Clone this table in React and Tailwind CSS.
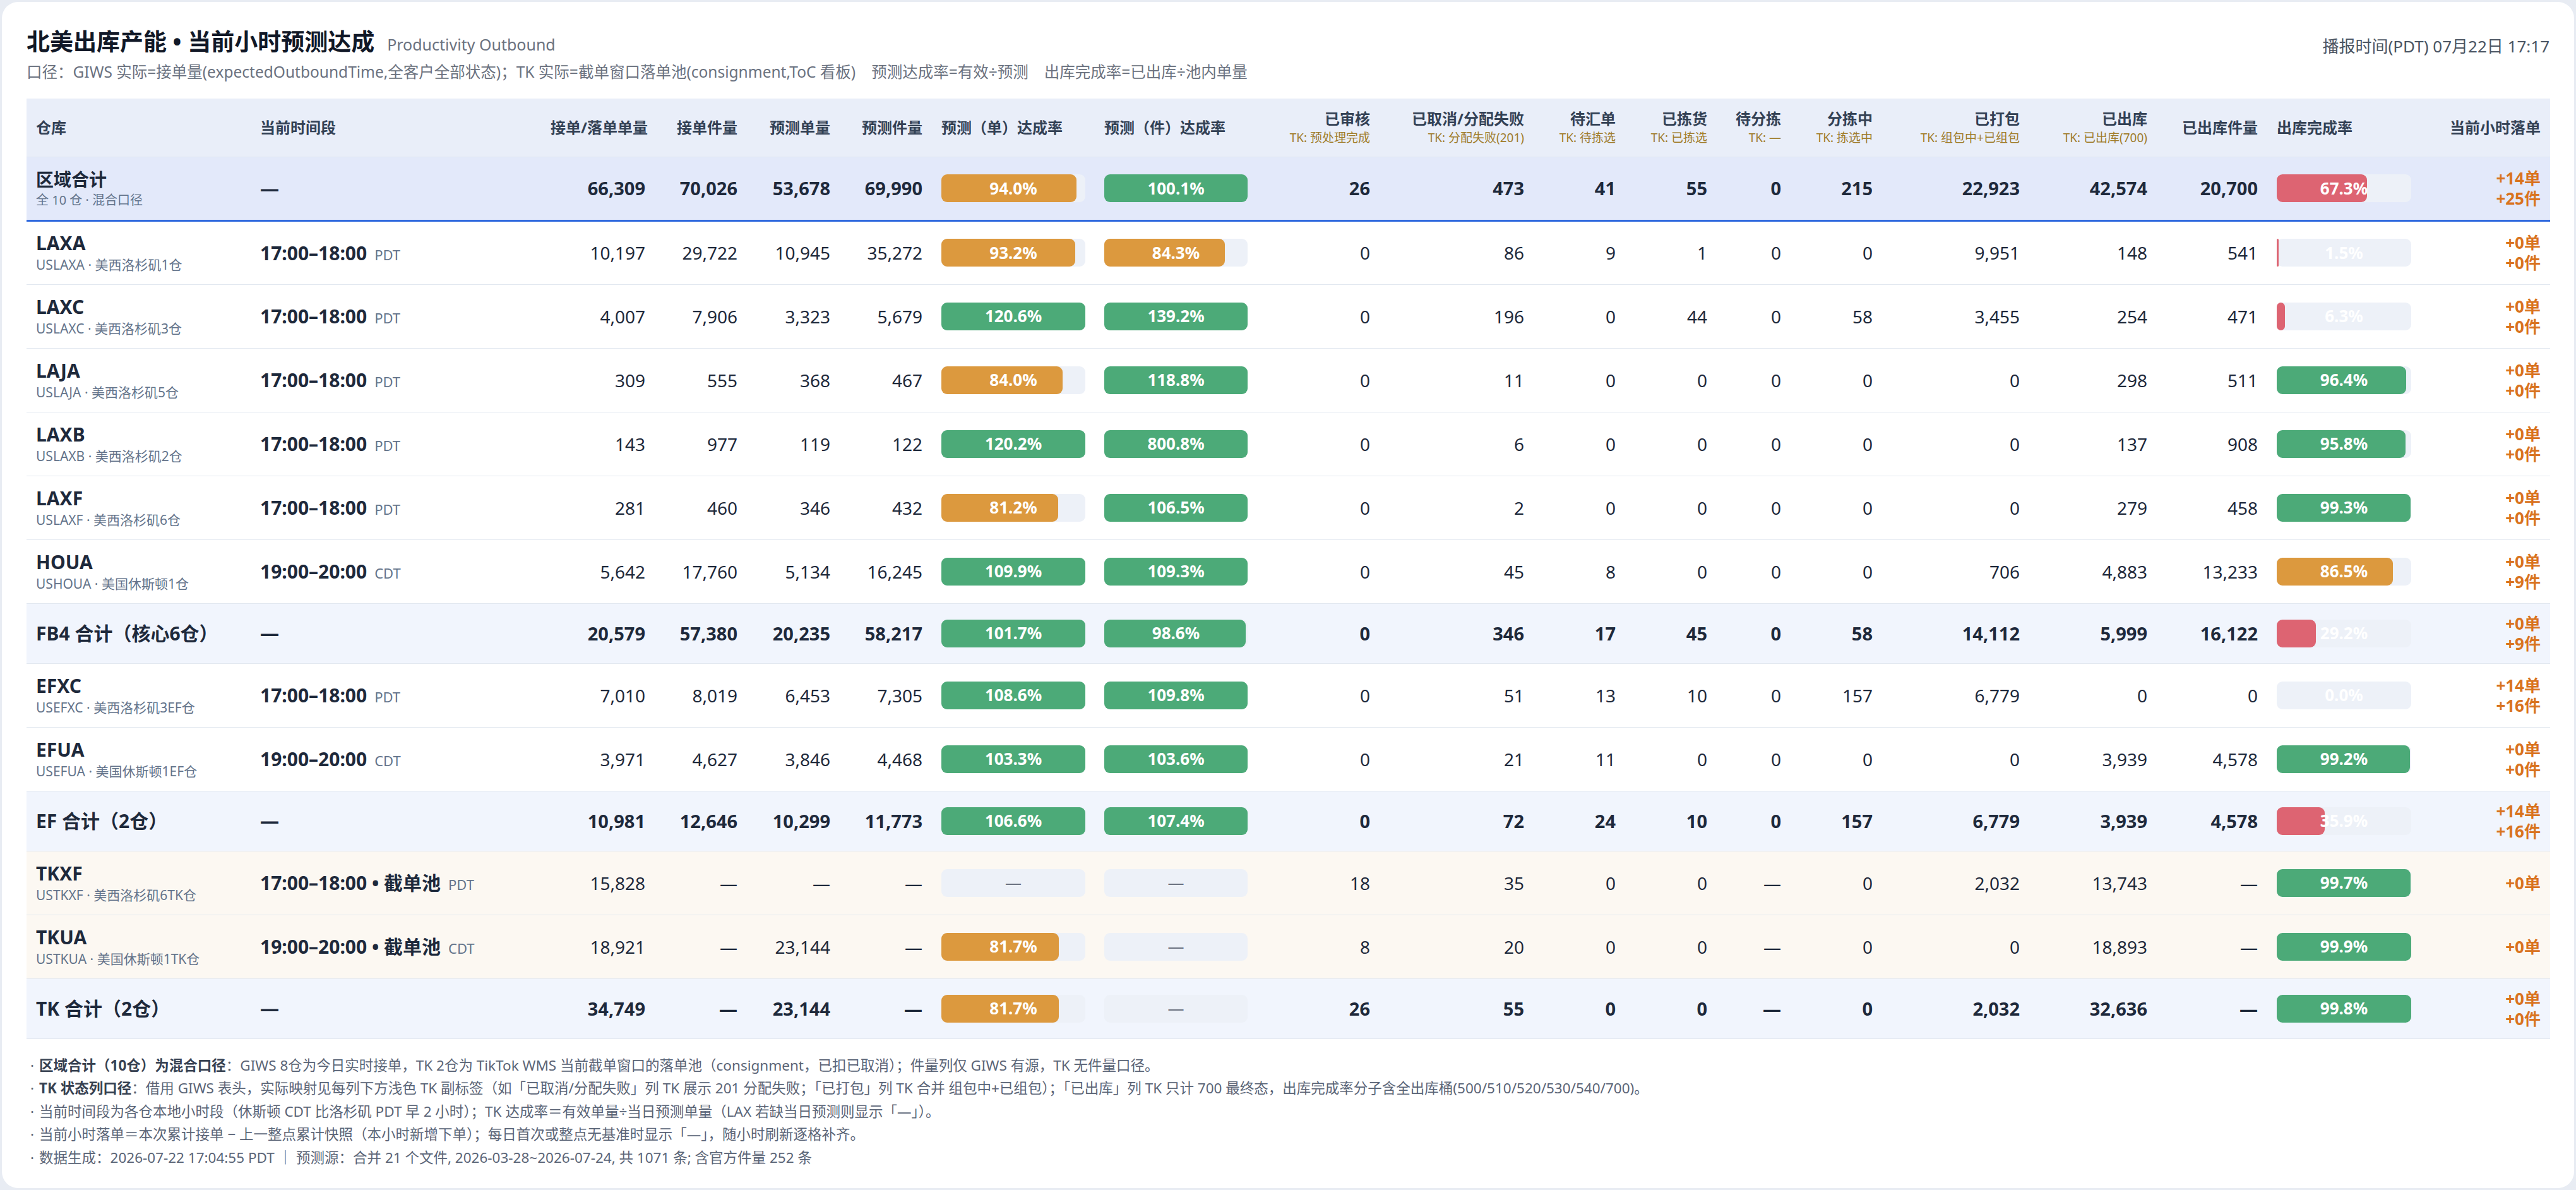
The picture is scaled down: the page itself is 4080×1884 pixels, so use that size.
import React from "react";

const COLS = [
  "w-[355px]", "w-[460px]", "w-[180px]", "w-[146px]", "w-[147px]", "w-[146px]", "w-[258px]",
  "w-[257px]", "w-[194px]", "w-[244px]", "w-[145px]", "w-[145px]", "w-[117px]", "w-[145px]",
  "w-[233px]", "w-[202px]", "w-[175px]", "w-[243px]", "w-[205px]",
];

const HEAD = [
  { t: "仓库", left: true },
  { t: "当前时间段", left: true },
  { t: "接单/落单单量" },
  { t: "接单件量" },
  { t: "预测单量" },
  { t: "预测件量" },
  { t: "预测（单）达成率", left: true },
  { t: "预测（件）达成率", left: true },
  { t: "已审核", s: "TK: 预处理完成" },
  { t: "已取消/分配失败", s: "TK: 分配失败(201)" },
  { t: "待汇单", s: "TK: 待拣选" },
  { t: "已拣货", s: "TK: 已拣选" },
  { t: "待分拣", s: "TK: —" },
  { t: "分拣中", s: "TK: 拣选中" },
  { t: "已打包", s: "TK: 组包中+已组包" },
  { t: "已出库", s: "TK: 已出库(700)" },
  { t: "已出库件量" },
  { t: "出库完成率", left: true },
  { t: "当前小时落单" },
];

// kind: total | wh | sub | tk
const ROWS = [
  {
    kind: "total", code: "区域合计", sub: "全 10 仓 · 混合口径",
    v: ["66,309", "70,026", "53,678", "69,990"], r1: 94.0, r2: 100.1,
    s: ["26", "473", "41", "55", "0", "215", "22,923", "42,574", "20,700"], done: 67.3, hour: ["+14单", "+25件"],
  },
  {
    kind: "wh", code: "LAXA", sub: "USLAXA · 美西洛杉矶1仓", time: "17:00–18:00", tz: "PDT",
    v: ["10,197", "29,722", "10,945", "35,272"], r1: 93.2, r2: 84.3,
    s: ["0", "86", "9", "1", "0", "0", "9,951", "148", "541"], done: 1.5, hour: ["+0单", "+0件"],
  },
  {
    kind: "wh", code: "LAXC", sub: "USLAXC · 美西洛杉矶3仓", time: "17:00–18:00", tz: "PDT",
    v: ["4,007", "7,906", "3,323", "5,679"], r1: 120.6, r2: 139.2,
    s: ["0", "196", "0", "44", "0", "58", "3,455", "254", "471"], done: 6.3, hour: ["+0单", "+0件"],
  },
  {
    kind: "wh", code: "LAJA", sub: "USLAJA · 美西洛杉矶5仓", time: "17:00–18:00", tz: "PDT",
    v: ["309", "555", "368", "467"], r1: 84.0, r2: 118.8,
    s: ["0", "11", "0", "0", "0", "0", "0", "298", "511"], done: 96.4, hour: ["+0单", "+0件"],
  },
  {
    kind: "wh", code: "LAXB", sub: "USLAXB · 美西洛杉矶2仓", time: "17:00–18:00", tz: "PDT",
    v: ["143", "977", "119", "122"], r1: 120.2, r2: 800.8,
    s: ["0", "6", "0", "0", "0", "0", "0", "137", "908"], done: 95.8, hour: ["+0单", "+0件"],
  },
  {
    kind: "wh", code: "LAXF", sub: "USLAXF · 美西洛杉矶6仓", time: "17:00–18:00", tz: "PDT",
    v: ["281", "460", "346", "432"], r1: 81.2, r2: 106.5,
    s: ["0", "2", "0", "0", "0", "0", "0", "279", "458"], done: 99.3, hour: ["+0单", "+0件"],
  },
  {
    kind: "wh", code: "HOUA", sub: "USHOUA · 美国休斯顿1仓", time: "19:00–20:00", tz: "CDT",
    v: ["5,642", "17,760", "5,134", "16,245"], r1: 109.9, r2: 109.3,
    s: ["0", "45", "8", "0", "0", "0", "706", "4,883", "13,233"], done: 86.5, hour: ["+0单", "+9件"],
  },
  {
    kind: "sub", code: "FB4 合计（核心6仓）",
    v: ["20,579", "57,380", "20,235", "58,217"], r1: 101.7, r2: 98.6,
    s: ["0", "346", "17", "45", "0", "58", "14,112", "5,999", "16,122"], done: 29.2, hour: ["+0单", "+9件"],
  },
  {
    kind: "wh", code: "EFXC", sub: "USEFXC · 美西洛杉矶3EF仓", time: "17:00–18:00", tz: "PDT",
    v: ["7,010", "8,019", "6,453", "7,305"], r1: 108.6, r2: 109.8,
    s: ["0", "51", "13", "10", "0", "157", "6,779", "0", "0"], done: 0, hour: ["+14单", "+16件"],
  },
  {
    kind: "wh", code: "EFUA", sub: "USEFUA · 美国休斯顿1EF仓", time: "19:00–20:00", tz: "CDT",
    v: ["3,971", "4,627", "3,846", "4,468"], r1: 103.3, r2: 103.6,
    s: ["0", "21", "11", "0", "0", "0", "0", "3,939", "4,578"], done: 99.2, hour: ["+0单", "+0件"],
  },
  {
    kind: "sub", code: "EF 合计（2仓）",
    v: ["10,981", "12,646", "10,299", "11,773"], r1: 106.6, r2: 107.4,
    s: ["0", "72", "24", "10", "0", "157", "6,779", "3,939", "4,578"], done: 35.9, hour: ["+14单", "+16件"],
  },
  {
    kind: "tk", code: "TKXF", sub: "USTKXF · 美西洛杉矶6TK仓", time: "17:00–18:00 • 截单池", tz: "PDT",
    v: ["15,828", "—", "—", "—"], r1: null, r2: null,
    s: ["18", "35", "0", "0", "—", "0", "2,032", "13,743", "—"], done: 99.7, hour: ["+0单"],
  },
  {
    kind: "tk", code: "TKUA", sub: "USTKUA · 美国休斯顿1TK仓", time: "19:00–20:00 • 截单池", tz: "CDT",
    v: ["18,921", "—", "23,144", "—"], r1: 81.7, r2: null,
    s: ["8", "20", "0", "0", "—", "0", "0", "18,893", "—"], done: 99.9, hour: ["+0单"],
  },
  {
    kind: "sub", code: "TK 合计（2仓）",
    v: ["34,749", "—", "23,144", "—"], r1: 81.7, r2: null,
    s: ["26", "55", "0", "0", "—", "0", "2,032", "32,636", "—"], done: 99.8, hour: ["+0单", "+0件"],
  },
];

const FILL = {
  green: "bg-[#4caa78]",
  orange: "bg-[#dc993e]",
  red: "bg-[#dd6472]",
};

function tone(p) {
  if (p >= 95) return "green";
  if (p >= 80) return "orange";
  return "red";
}

function Bar({ pct }) {
  if (pct === null) {
    return (
      <div className="flex h-[44px] w-full items-center justify-center rounded-[9px] bg-[#edf1f8] text-[26px] text-[#6b7280]">
        —
      </div>
    );
  }
  return (
    <div className="relative h-[44px] w-full rounded-[9px] bg-[#edf1f8]">
      {pct > 0 && (
        <div
          className={`absolute inset-y-0 left-0 rounded-[9px] ${FILL[tone(pct)]}`}
          style={{ width: `${Math.min(pct, 100)}%` }}
        />
      )}
      <span className="relative flex h-full items-center justify-center text-[26px] font-bold text-white">
        {pct.toFixed(1)}%
      </span>
    </div>
  );
}

const ROW_BG = {
  total: "bg-[#e3e9fa]",
  wh: "bg-white",
  sub: "bg-[#f1f5fd]",
  tk: "bg-[#fcf8f2]",
};

function Row({ r }) {
  const summary = r.kind === "total" || r.kind === "sub";
  const line = r.kind === "total" ? "border-b-[3px] border-b-[#3069de]" : "border-b border-b-[#e2e8f0]";
  const h = r.kind === "sub" ? "h-[95px]" : "h-[101px]";
  const td = `px-[15px] ${line}`;
  const num = summary ? "text-[29px] font-bold text-[#1e293b]" : "text-[28px] text-[#1e293b]";

  return (
    <tr className={`${ROW_BG[r.kind]} ${h}`}>
      <td className={td}>
        {r.kind === "total" ? (
          <div className="flex flex-col">
            <span className="text-[28px] font-bold leading-[38px] text-[#1e293b]">{r.code}</span>
            <span className="text-[20px] leading-[28px] text-[#64748b]">{r.sub}</span>
          </div>
        ) : r.sub ? (
          <div className="flex flex-col">
            <span className="text-[30px] font-bold leading-[38px] text-[#1e293b]">{r.code}</span>
            <span className="text-[21px] leading-[30px] text-[#64748b]">{r.sub}</span>
          </div>
        ) : (
          <span className="text-[30px] font-bold text-[#1e293b]">{r.code}</span>
        )}
      </td>
      <td className={td}>
        {r.time ? (
          <span className="whitespace-nowrap">
            <span className="text-[30px] font-bold text-[#1e293b]">{r.time}</span>
            <span className="ml-[12px] text-[22px] text-[#64748b]">{r.tz}</span>
          </span>
        ) : (
          <span className="text-[30px] font-bold text-[#1e293b]">—</span>
        )}
      </td>
      {r.v.map((x, i) => (
        <td key={i} className={`${td} text-right ${num}`}>{x}</td>
      ))}
      <td className={td}><Bar pct={r.r1} /></td>
      <td className={td}><Bar pct={r.r2} /></td>
      {r.s.map((x, i) => (
        <td key={i} className={`${td} text-right ${num}`}>{x}</td>
      ))}
      <td className={td}><Bar pct={r.done} /></td>
      <td className={`${td} text-right`}>
        <div className="flex flex-col items-end text-[26px] font-bold leading-[32px] text-[#d9731f]">
          {r.hour.map((x) => (
            <span key={x}>{x}</span>
          ))}
        </div>
      </td>
    </tr>
  );
}

function Note({ label, children }) {
  return (
    <p className="leading-[36.5px]">
      <span className="mr-[8px]">·</span>
      {label && <span className="font-bold text-[#374151]">{label}</span>}
      {children}
    </p>
  );
}

export default function App() {
  return (
    <div className="h-[1884px] bg-[#e8ecf3] p-[3px] font-['Noto_Sans','Noto_Sans_CJK_SC',sans-serif]">
      <div className="flex h-full flex-col rounded-[26px] bg-white px-[39px] pt-[39px]">
        <div className="flex items-start justify-between">
          <div>
            <div className="flex items-baseline gap-[20px]">
              <h1 className="text-[37px] font-bold leading-[48px] text-[#111827]">北美出库产能 • 当前小时预测达成</h1>
              <span className="text-[25px] text-[#6b7280]">Productivity Outbound</span>
            </div>
            <div className="mt-[8px] flex gap-[25px] text-[24.5px] leading-[32px] text-[#6b7280]">
              <span>口径：GIWS 实际=接单量(expectedOutboundTime,全客户全部状态)；TK 实际=截单窗口落单池(consignment,ToC 看板)</span>
              <span>预测达成率=有效÷预测</span>
              <span>出库完成率=已出库÷池内单量</span>
            </div>
          </div>
          <div className="pt-[12px] text-[26px] text-[#4b5563]">播报时间(PDT) 07月22日 17:17</div>
        </div>

        <table className="mt-[26px] w-full table-fixed border-collapse">
          <colgroup>
            {COLS.map((c, i) => (
              <col key={i} className={c} />
            ))}
          </colgroup>
          <thead>
            <tr className="h-[92px] bg-[#e9eef9]">
              {HEAD.map((h, i) => (
                <th
                  key={i}
                  className={`border-b border-b-[#dfe5f0] px-[15px] align-middle font-normal ${h.left ? "text-left" : "text-right"}`}
                >
                  <div className="whitespace-nowrap text-[24px] font-bold leading-[32px] text-[#334155]">{h.t}</div>
                  {h.s && <div className="whitespace-nowrap text-[19px] leading-[28px] text-[#a07c2a]">{h.s}</div>}
                </th>
              ))}
            </tr>
          </thead>
          <tbody>
            {ROWS.map((r) => (
              <Row key={r.code} r={r} />
            ))}
          </tbody>
        </table>

        <div className="mt-[24px] pl-[6px] text-[22.5px] text-[#5b6577]">
          <Note label="区域合计（10仓）为混合口径">：GIWS 8仓为今日实时接单，TK 2仓为 TikTok WMS 当前截单窗口的落单池（consignment，已扣已取消）；件量列仅 GIWS 有源，TK 无件量口径。</Note>
          <Note label="TK 状态列口径">：借用 GIWS 表头，实际映射见每列下方浅色 TK 副标签（如「已取消/分配失败」列 TK 展示 201 分配失败；「已打包」列 TK 合并 组包中+已组包）；「已出库」列 TK 只计 700 最终态，出库完成率分子含全出库桶(500/510/520/530/540/700)。</Note>
          <Note>当前时间段为各仓本地小时段（休斯顿 CDT 比洛杉矶 PDT 早 2 小时）；TK 达成率＝有效单量÷当日预测单量（LAX 若缺当日预测则显示「—」）。</Note>
          <Note>当前小时落单＝本次累计接单 − 上一整点累计快照（本小时新增下单）；每日首次或整点无基准时显示「—」，随小时刷新逐格补齐。</Note>
          <Note>数据生成：2026-07-22 17:04:55 PDT ｜ 预测源：合并 21 个文件, 2026-03-28~2026-07-24, 共 1071 条; 含官方件量 252 条</Note>
        </div>
      </div>
    </div>
  );
}
